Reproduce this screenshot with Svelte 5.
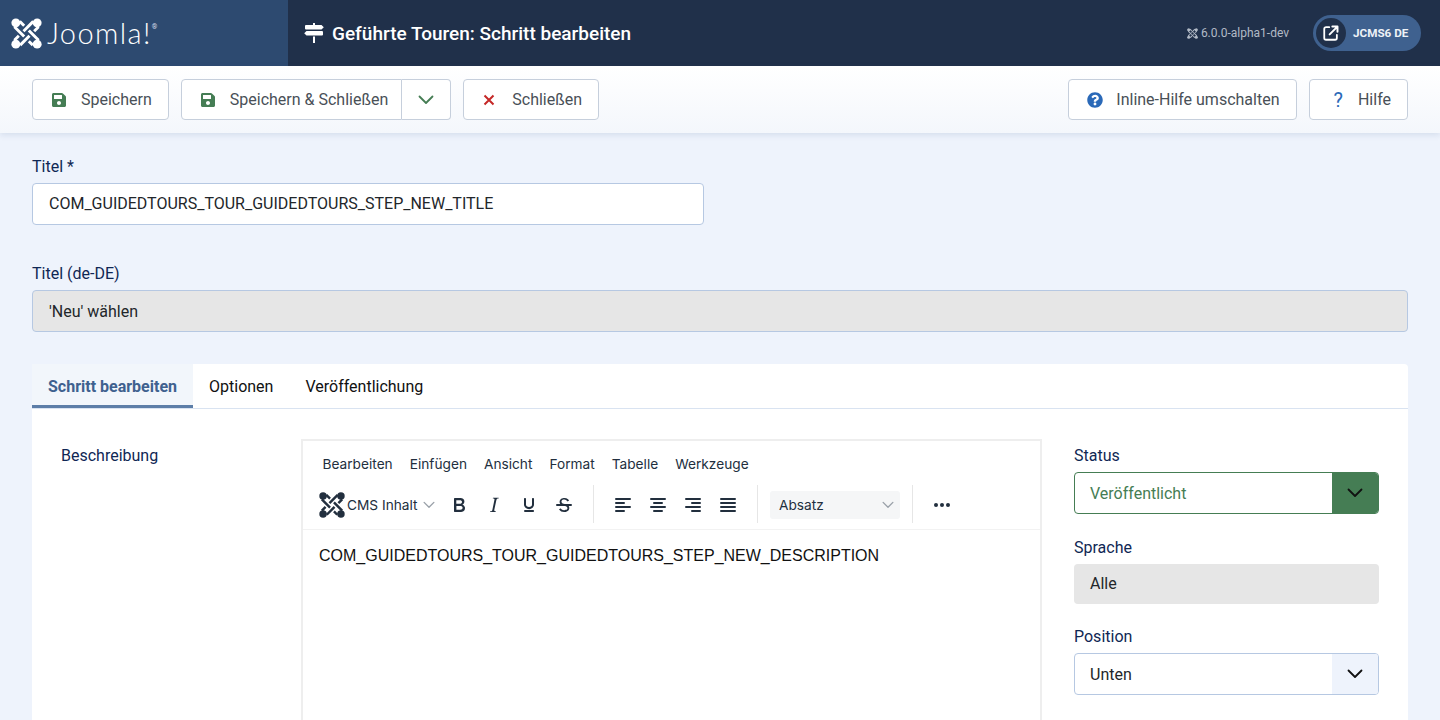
<script>
  const savePath = "M433.941 129.941l-83.882-83.882A48 48 0 0 0 316.118 32H48C21.49 32 0 53.49 0 80v352c0 26.51 21.49 48 48 48h352c26.51 0 48-21.49 48-48V163.882a48 48 0 0 0-14.059-33.941zM224 416c-35.346 0-64-28.654-64-64 0-35.346 28.654-64 64-64s64 28.654 64 64c0 35.346-28.654 64-64 64zm96-304.52V212c0 6.627-5.373 12-12 12H76c-6.627 0-12-5.373-12-12V108c0-6.627 5.373-12 12-12h228.52c3.183 0 6.235 1.264 8.485 3.515l3.48 3.48A11.996 11.996 0 0 1 320 111.48z";
  const helpPath = "M504 256c0 136.997-111.043 248-248 248S8 392.997 8 256C8 119.083 119.043 8 256 8s248 111.083 248 248zM262.655 90c-54.497 0-89.255 22.957-116.549 63.758-3.536 5.286-2.353 12.415 2.715 16.258l34.699 26.31c5.205 3.947 12.621 3.008 16.665-2.122 17.864-22.658 30.113-35.797 57.303-35.797 20.429 0 45.698 13.148 45.698 32.958 0 14.976-12.363 22.667-32.534 33.976C247.128 238.528 216 254.941 216 296v4c0 6.627 5.373 12 12 12h56c6.627 0 12-5.373 12-12v-1.333c0-28.462 83.186-29.647 83.186-106.667 0-58.002-60.165-102-116.531-102zM256 338c-25.365 0-46 20.635-46 46 0 25.364 20.635 46 46 46s46-20.636 46-46c0-25.365-20.635-46-46-46z";
  const menus = ["Bearbeiten", "Einfügen", "Ansicht", "Format", "Tabelle", "Werkzeuge"];
  const formatIcons = [
    "M7.8 19c-.3 0-.5 0-.6-.2l-.2-.5V5.7c0-.2 0-.4.2-.5l.6-.2h5c1.5 0 2.7.3 3.5 1 .7.6 1.1 1.4 1.1 2.5a3 3 0 0 1-.6 1.9c-.4.6-1 1-1.6 1.2.4.1.9.3 1.3.6s.8.7 1 1.2c.4.4.5 1 .5 1.6 0 1.3-.4 2.3-1.3 3-.8.7-2.1 1-3.8 1H7.8zm5-8.3c.6 0 1.2-.1 1.6-.5.4-.3.6-.7.6-1.3 0-1.1-.8-1.7-2.4-1.7H9.3v3.5h3.4zm.5 6c.7 0 1.3-.1 1.7-.4.4-.4.6-.9.6-1.5s-.2-1-.7-1.4c-.4-.3-1-.4-2-.4H9.4v3.8h4z",
    "m16.7 4.7-.1.9h-.3c-.6 0-1 0-1.4.3-.3.3-.4.6-.5 1.1l-2.1 9.8v.6c0 .5.4.8 1.4.8h.2l-.2.8H8l.2-.8h.2c1.1 0 1.8-.5 2-1.5l2-9.8.1-.5c0-.6-.4-.8-1.4-.8h-.3l.2-.9h5.8Z",
    "M16 5c.6 0 1 .4 1 1v5.5a4 4 0 0 1-.4 1.8l-1 1.4a5.3 5.3 0 0 1-5.5 1 5 5 0 0 1-1.6-1c-.5-.4-.8-.9-1.1-1.4a4 4 0 0 1-.4-1.8V6c0-.6.4-1 1-1s1 .4 1 1v5.5c0 .3 0 .6.2 1l.6.7a3.3 3.3 0 0 0 2.2.8 3.4 3.4 0 0 0 2.2-.8c.3-.2.4-.5.6-.8l.2-.9V6c0-.6.4-1 1-1ZM8 17h8c.6 0 1 .4 1 1s-.4 1-1 1H8a1 1 0 0 1 0-2Z",
    "M15.6 8.5c-.5-.7-1-1.1-1.3-1.3-.6-.4-1.3-.6-2-.6-2.7 0-2.8 1.7-2.8 2.1 0 1.6 1.8 2 3.2 2.3 4.4.9 4.6 2.8 4.6 3.9 0 1.4-.7 4.1-5 4.1A6.2 6.2 0 0 1 7 16.4l1.5-1.1c.4.6 1.6 2 3.7 2 1.6 0 2.5-.4 3-1.2.4-.8.3-2-.8-2.6-.7-.4-1.6-.7-2.9-1-1-.2-3.9-.8-3.9-3.6C7.6 6 10.3 5 12.4 5c2.9 0 4.2 1.6 4.7 2.4l-1.5 1.1Z M5 11h14a1 1 0 0 1 0 2H5a1 1 0 0 1 0-2Z"
  ];
  const alignIcons = [
    "M5 5h14a1 1 0 0 1 0 2H5a1 1 0 1 1 0-2Zm0 4h8a1 1 0 0 1 0 2H5a1 1 0 1 1 0-2Zm0 8h8a1 1 0 0 1 0 2H5a1 1 0 0 1 0-2Zm0-4h14a1 1 0 0 1 0 2H5a1 1 0 0 1 0-2Z",
    "M5 5h14a1 1 0 0 1 0 2H5a1 1 0 1 1 0-2Zm3 4h8a1 1 0 0 1 0 2H8a1 1 0 1 1 0-2Zm0 8h8a1 1 0 0 1 0 2H8a1 1 0 0 1 0-2Zm-3-4h14a1 1 0 0 1 0 2H5a1 1 0 0 1 0-2Z",
    "M5 5h14a1 1 0 0 1 0 2H5a1 1 0 1 1 0-2Zm6 4h8a1 1 0 0 1 0 2h-8a1 1 0 0 1 0-2Zm0 8h8a1 1 0 0 1 0 2h-8a1 1 0 0 1 0-2Zm-6-4h14a1 1 0 0 1 0 2H5a1 1 0 0 1 0-2Z",
    "M5 5h14a1 1 0 0 1 0 2H5a1 1 0 1 1 0-2Zm0 4h14a1 1 0 0 1 0 2H5a1 1 0 1 1 0-2Zm0 8h14a1 1 0 0 1 0 2H5a1 1 0 0 1 0-2Zm0-4h14a1 1 0 0 1 0 2H5a1 1 0 0 1 0-2Z"
  ];
</script>

{#snippet knot(cls)}
  <svg class={cls} viewBox="0 0 32 32" aria-hidden="true">
    <g fill="none" stroke="currentColor" stroke-width="3">
      <path d="M3.500 9 13.600 19.100M18.400 23.900 22.500 28" />
      <path d="M9 3.500 13.600 8.100M18.400 12.900 28.500 23" />
      <path d="M28.500 9 23.900 13.600M19.100 18.400 9.500 28" />
      <path d="M23 3.500 12.900 13.600M8.100 18.400 3.500 23" />
    </g>
    <g fill="currentColor">
      <circle cx="5" cy="5" r="4.600" />
      <circle cx="27" cy="5" r="4.600" />
      <circle cx="5" cy="27" r="4.600" />
      <circle cx="27" cy="27" r="4.600" />
    </g>
  </svg>
{/snippet}

{#snippet save()}
  <svg class="ico-save" viewBox="0 0 448 512" aria-hidden="true"><path d={savePath} /></svg>
{/snippet}

{#snippet chev(cls)}
  <svg class={cls} viewBox="0 0 16 10" aria-hidden="true"><path d="M1.5 1.5 8 8l6.5-6.5" fill="none" stroke="currentColor" stroke-width="1.8" stroke-linecap="round" stroke-linejoin="round" /></svg>
{/snippet}

<div class="page">
  <header class="topbar">
    <div class="brand">
      {@render knot("brand-mark")}
      <span class="wordmark">Joomla!</span><span class="reg">®</span>
    </div>
    <div class="heading">
      <svg class="sign" viewBox="0 0 20 20" aria-hidden="true">
        <path fill="currentColor" d="M9 0h2v2h6.500l2.300 2.200L17.500 6.500H2a1 1 0 0 1-1-1V3a1 1 0 0 1 1-1h7V0Zm-6.500 8H18a1 1 0 0 1 1 1v2.500a1 1 0 0 1-1 1H2.500L.2 10.200 2.500 8ZM9 13.500h2V20H9v-6.500Z" />
      </svg>
      <h1>Geführte Touren: Schritt bearbeiten</h1>
    </div>
    <div class="top-right">
      <span class="version">{@render knot("ver-mark")}6.0.0-alpha1-dev</span>
      <div class="site-pill">
        <span class="site-ico">
          <svg viewBox="0 0 20 20" aria-hidden="true">
            <path d="M8 3.500H4.500a2 2 0 0 0-2 2v10a2 2 0 0 0 2 2h10a2 2 0 0 0 2-2V12" fill="none" stroke="currentColor" stroke-width="2" stroke-linecap="round" />
            <path d="M8.500 11.500 16 4M11.500 2.800h5.700v5.700" fill="none" stroke="currentColor" stroke-width="2.200" stroke-linecap="round" stroke-linejoin="round" />
          </svg>
        </span>
        <span class="site-name">JCMS6 DE</span>
      </div>
    </div>
  </header>

  <div class="toolbar">
    <div class="tool-group">
      <button class="btn">{@render save()}<span>Speichern</span></button>
      <div class="split">
        <button class="btn in-split">{@render save()}<span>Speichern &amp; Schließen</span></button>
        <button class="caret">{@render chev("caret-ico")}</button>
      </div>
      <button class="btn">
        <svg class="ico-x" viewBox="0 0 12 12" aria-hidden="true"><path d="M1.500 1.500l9 9m0-9l-9 9" fill="none" stroke="currentColor" stroke-width="2" /></svg>
        <span>Schließen</span>
      </button>
    </div>
    <div class="tool-group">
      <button class="btn btn-inline">
        <svg class="ico-help" viewBox="0 0 512 512" aria-hidden="true"><path d={helpPath} /></svg>
        <span>Inline-Hilfe umschalten</span>
      </button>
      <button class="btn btn-help"><span class="q">?</span><span>Hilfe</span></button>
    </div>
  </div>

  <main class="content">
    <div class="field title-field">
      <div class="label">Titel *</div>
      <div class="input">COM_GUIDEDTOURS_TOUR_GUIDEDTOURS_STEP_NEW_TITLE</div>
    </div>
    <div class="field lang-field">
      <div class="label">Titel (de-DE)</div>
      <div class="input readonly">'Neu' wählen</div>
    </div>

    <section class="card">
      <div class="tabs">
        <div class="tab active">Schritt bearbeiten</div>
        <div class="tab">Optionen</div>
        <div class="tab">Veröffentlichung</div>
      </div>
      <div class="card-body">
        <div class="desc-label">Beschreibung</div>
        <div class="editor">
          <div class="menubar">
            {#each menus as m}<span class="menu-item">{m}</span>{/each}
          </div>
          <div class="edit-tools">
            <div class="tool-sec first">
              {@render knot("cms-mark")}
              <span class="cms-text">CMS Inhalt</span>
              {@render chev("mini-chev")}
              <div class="icon-row fmt">
                {#each formatIcons as d}
                  <svg class="tiny" viewBox="0 0 24 24" aria-hidden="true"><path d={d} /></svg>
                {/each}
              </div>
            </div>
            <div class="tool-sec aligns">
              {#each alignIcons as d}
                <svg class="tiny" viewBox="0 0 24 24" aria-hidden="true"><path d={d} /></svg>
              {/each}
            </div>
            <div class="tool-sec para">
              <div class="para-select"><span>Absatz</span>{@render chev("mini-chev")}</div>
            </div>
            <div class="tool-sec more">
              <svg class="tiny" viewBox="0 0 24 24" aria-hidden="true"><circle cx="6" cy="12" r="2" /><circle cx="12" cy="12" r="2" /><circle cx="18" cy="12" r="2" /></svg>
            </div>
          </div>
          <div class="edit-area">COM_GUIDEDTOURS_TOUR_GUIDEDTOURS_STEP_NEW_DESCRIPTION</div>
        </div>
        <aside class="side">
          <div class="side-field status-field">
            <div class="label">Status</div>
            <div class="select green"><span>Veröffentlicht</span><span class="sel-btn">{@render chev("sel-chev")}</span></div>
          </div>
          <div class="side-field lang2-field">
            <div class="label">Sprache</div>
            <div class="static">Alle</div>
          </div>
          <div class="side-field">
            <div class="label">Position</div>
            <div class="select"><span>Unten</span><span class="sel-btn">{@render chev("sel-chev")}</span></div>
          </div>
        </aside>
      </div>
    </section>
  </main>
</div>

<style>
  :global(body) {
    margin: 0;
    background: #eef3fc;
    font-family: Roboto, "Liberation Sans", sans-serif;
    overflow: hidden;
  }
  .page {
    height: 720px;
    overflow: hidden;
    display: flex;
    flex-direction: column;
    background: #eef3fc;
    color: #22262a;
  }

  .topbar {
    height: 66px;
    flex: none;
    display: flex;
    align-items: stretch;
    background: #20304a;
    color: #fff;
  }
  .brand {
    width: 288px;
    flex: none;
    box-sizing: border-box;
    padding-left: 11px;
    display: flex;
    align-items: center;
    background: #2d4a70;
  }
  .brand :global(.brand-mark) {
    width: 31px;
    height: 31px;
    color: #fff;
  }
  .wordmark {
    margin-left: 5px;
    font-family: Lato, "Open Sans", sans-serif;
    font-weight: 300;
    font-size: 29px;
    line-height: 32px;
    letter-spacing: 1.400px;
  }
  .reg {
    font-size: 7px;
    align-self: flex-start;
    margin: 23px 0 0 0;
    line-height: 8px;
    color: #d8dee8;
  }
  .heading {
    display: flex;
    align-items: center;
    padding-left: 16px;
  }
  .sign {
    width: 20px;
    height: 20px;
    margin-right: 8px;
  }
  h1 {
    margin: 0;
    font-size: 19px;
    font-weight: 500;
  }
  .top-right {
    margin-left: auto;
    display: flex;
    align-items: center;
    padding-right: 19px;
  }
  .version {
    display: flex;
    align-items: center;
    font-size: 12px;
    color: #b2bac6;
    margin-right: 24px;
  }
  .version :global(.ver-mark) {
    width: 11px;
    height: 11px;
    margin-right: 3px;
    color: #b2bac6;
  }
  .site-pill {
    display: flex;
    align-items: center;
    width: 108px;
    height: 36px;
    border-radius: 18px;
    background: #3f618f;
    padding-left: 3px;
    box-sizing: border-box;
  }
  .site-ico {
    width: 30px;
    height: 30px;
    border-radius: 50%;
    background: #20304a;
    display: flex;
    align-items: center;
    justify-content: center;
  }
  .site-ico svg {
    width: 18px;
    height: 18px;
  }
  .site-name {
    margin-left: 7px;
    font-size: 11.700px;
    font-weight: 700;
    color: #eef2f7;
  }

  .toolbar {
    height: 67px;
    flex: none;
    box-sizing: border-box;
    display: flex;
    justify-content: space-between;
    align-items: flex-start;
    padding: 13px 32px 0;
    background: linear-gradient(#fff, #f4f7fc);
    box-shadow: 0 2px 6px rgba(60, 90, 140, 0.14);
    position: relative;
  }
  .tool-group {
    display: flex;
    gap: 12px;
  }
  .btn {
    height: 41px;
    box-sizing: border-box;
    display: flex;
    align-items: center;
    padding: 0 16px 0 19px;
    background: #fff;
    border: 1px solid #c6cfdc;
    border-radius: 4px;
    font: 400 16px Roboto, sans-serif;
    color: #495057;
  }
  .btn :global(.ico-save) {
    width: 14px;
    height: 16px;
    margin-right: 15px;
    fill: #457d54;
  }
  .split {
    display: flex;
  }
  .in-split {
    border-radius: 4px 0 0 4px;
    padding-right: 13px;
  }
  .caret {
    width: 49px;
    height: 41px;
    box-sizing: border-box;
    padding: 0;
    display: flex;
    align-items: center;
    justify-content: center;
    background: #fff;
    border: 1px solid #c6cfdc;
    border-left: 0;
    border-radius: 0 4px 4px 0;
    color: #457d54;
  }
  .caret :global(.caret-ico) {
    width: 16px;
    height: 10px;
  }
  .ico-x {
    width: 12px;
    height: 12px;
    margin-right: 17px;
    color: #c52827;
  }
  .btn-inline {
    padding: 0 17px 0 18px;
  }
  .ico-help {
    width: 16px;
    height: 16px;
    margin-right: 13px;
    fill: #2a69b8;
  }
  .btn-help {
    padding-left: 23px;
  }
  .q {
    color: #2a69b8;
    font-size: 20px;
    font-weight: 400;
    margin-right: 15px;
  }

  .content {
    padding: 24px 32px 0;
    flex: 1;
    min-height: 0;
    display: flex;
    flex-direction: column;
  }
  .label {
    font-size: 16px;
    line-height: 20px;
    color: #0f2754;
    margin-bottom: 6px;
  }
  .input {
    height: 42px;
    box-sizing: border-box;
    display: flex;
    align-items: center;
    padding: 0 16px;
    background: #fff;
    border: 1px solid #b6c8e2;
    border-radius: 4px;
    font-size: 16px;
    color: #22262a;
  }
  .title-field {
    width: 672px;
    margin-bottom: 39px;
  }
  .title-field .input {
    padding-bottom: 2px;
  }
  .lang-field {
    margin-bottom: 32px;
  }
  .readonly {
    background: #e6e6e6;
    color: #22262a;
  }

  .card {
    flex: 1;
    background: #fff;
    border-radius: 4px 4px 0 0;
    display: flex;
    flex-direction: column;
  }
  .tabs {
    height: 45px;
    flex: none;
    box-sizing: border-box;
    display: flex;
    border-bottom: 1px solid #d9e3f1;
  }
  .tab {
    height: 44px;
    box-sizing: border-box;
    padding: 0 16px;
    display: flex;
    align-items: center;
    font-size: 16px;
    color: #111;
  }
  .tab.active {
    background: #f2f6fb;
    color: #3f618f;
    font-weight: 700;
    border-bottom: 3px solid #5d7ea8;
    padding-top: 3px;
  }
  .card-body {
    display: flex;
    align-items: flex-start;
    padding-top: 30px;
  }
  .desc-label {
    width: 269px;
    flex: none;
    box-sizing: border-box;
    padding: 7px 0 0 29px;
    font-size: 16px;
    line-height: 20px;
    color: #0f2754;
  }
  .editor {
    width: 741px;
    flex: none;
    height: 400px;
    box-sizing: border-box;
    border: 2px solid #eeeeee;
    font-family: Inter, "Noto Sans", sans-serif;
    color: #222f3e;
  }
  .menubar {
    height: 39px;
    box-sizing: border-box;
    padding: 6px 0 0 11px;
    display: flex;
    align-items: center;
  }
  .menu-item {
    font-size: 13.700px;
    padding: 0 8.500px;
    color: #222f3e;
  }
  .edit-tools {
    height: 50px;
    box-sizing: border-box;
    display: flex;
    align-items: stretch;
    padding-top: 5px;
    padding-bottom: 6px;
    border-bottom: 1px solid #f2f2f2;
  }
  .tool-sec {
    display: flex;
    align-items: center;
    border-right: 1px solid #e6e6e6;
    box-sizing: border-box;
    padding-top: 2px;
  }
  .tool-sec.first {
    width: 291px;
    padding-left: 16px;
  }
  .tool-sec :global(.cms-mark) {
    width: 26px;
    height: 26px;
    color: #222f3e;
  }
  .cms-text {
    font-size: 13.700px;
    margin-left: 2px;
  }
  .tool-sec :global(.mini-chev) {
    width: 12px;
    height: 8px;
    color: #9aa1a9;
    margin-left: 5px;
  }
  .icon-row {
    display: flex;
    align-items: center;
  }
  .fmt {
    margin-left: 12px;
    gap: 11px;
  }
  .tiny {
    width: 24px;
    height: 24px;
    fill: #222f3e;
  }
  .aligns {
    width: 164px;
    padding-left: 17px;
    gap: 11px;
  }
  .para {
    width: 155px;
    padding-left: 12px;
  }
  .para-select {
    width: 130px;
    height: 28px;
    box-sizing: border-box;
    border-radius: 3px;
    background: #f5f6f7;
    display: flex;
    align-items: center;
    justify-content: space-between;
    padding: 0 6px 0 9px;
    font-size: 13.700px;
  }
  .more {
    border-right: 0;
    padding-left: 17px;
  }
  .edit-area {
    padding: 16px 0 0 16px;
    font-family: "Liberation Sans", Arial, sans-serif;
    font-size: 16px;
    line-height: 20px;
    color: #111;
  }

  .side {
    width: 305px;
    flex: none;
    margin-left: 32px;
    padding-top: 7px;
  }
  .status-field {
    margin-bottom: 24px;
  }
  .lang2-field {
    margin-bottom: 23px;
  }
  .select {
    height: 42px;
    box-sizing: border-box;
    display: flex;
    align-items: stretch;
    justify-content: space-between;
    background: #fff;
    border: 1px solid #b6c8e2;
    border-radius: 4px;
    font-size: 16px;
    color: #22262a;
    line-height: 42px;
    padding-left: 15px;
    overflow: hidden;
  }
  .sel-btn {
    width: 46px;
    display: flex;
    align-items: center;
    justify-content: center;
    background: #eef3fc;
    color: #111;
  }
  .sel-btn :global(.sel-chev) {
    width: 16px;
    height: 10px;
  }
  .select.green {
    border-color: #457d54;
    color: #457d54;
  }
  .select.green .sel-btn {
    background: #457d54;
    color: #111;
  }
  .static {
    height: 40px;
    box-sizing: border-box;
    padding: 0 0 1px 16px;
    display: flex;
    align-items: center;
    background: #e6e6e6;
    border-radius: 4px;
    font-size: 16px;
    color: #22262a;
  }
</style>
